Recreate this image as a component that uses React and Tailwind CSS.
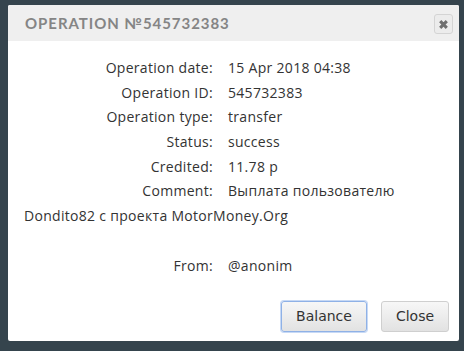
import React from 'react';

function Row({ label, children }) {
  return (
    <div className="h-[24.7px] leading-[24.7px]">
      <span className="inline-block w-[189px] text-right">{label}</span>
      <span className="ml-[15px]">{children}</span>
    </div>
  );
}

export default function App() {
  return (
    <div className="w-[464px] h-[351px] bg-[#35444d] pt-[5px] pl-[8px]">
      <div className="w-[451px] h-[336px] bg-white rounded-[2px] overflow-hidden flex flex-col">
        <div className="h-[36px] bg-[#efefef] flex items-center justify-between pl-[17px] pr-[6px]">
          <span className="text-[15px] tracking-[0.95px] text-[#858585] font-['Lato',sans-serif] font-bold mt-[1px]">
            OPERATION №545732383
          </span>
          <button className="w-[19px] h-[20px] mt-[2px] border border-[#d4d4d4] rounded-[3px] bg-[#ececec] flex items-center justify-center">
            <svg width="11" height="11" viewBox="0 0 10 10">
              <path d="M2 2 L8 8 M8 2 L2 8" stroke="#6f6f6f" strokeWidth="2.8" />
            </svg>
          </button>
        </div>
        <div className="px-[16px] pt-[15px] text-[14px] text-[#333] font-['Open_Sans',sans-serif] tracking-[0.3px] flex-1">
          <Row label="Operation date:">15 Apr 2018 04:38</Row>
          <Row label="Operation ID:">545732383</Row>
          <Row label="Operation type:">transfer</Row>
          <Row label="Status:">success</Row>
          <Row label="Credited:">11.78 р</Row>
          <p className="leading-[24.7px]">
            <span className="inline-block w-[189px] text-right">Comment:</span>
            <span className="ml-[15px]">Выплата пользователю Dondito82 с проекта MotorMoney.Org</span>
          </p>
          <div className="h-[24.7px]" />
          <Row label="From:">@anonim</Row>
        </div>
        <div className="flex justify-end gap-[14px] pr-[10px] pb-[9px]">
          <button className="w-[86px] h-[31px] rounded-[3px] border border-[#8fb1e6] bg-gradient-to-b from-[#f7f7f7] to-[#e2e2e2] text-[14px] text-[#333] font-['DejaVu_Sans',sans-serif] shadow-[0_0_0_1px_#c7d9f5]">
            Balance
          </button>
          <button className="w-[68px] h-[31px] rounded-[3px] border border-[#cfcfcf] bg-gradient-to-b from-[#f7f7f7] to-[#e2e2e2] text-[14px] text-[#333] font-['DejaVu_Sans',sans-serif]">
            Close
          </button>
        </div>
      </div>
    </div>
  );
}
